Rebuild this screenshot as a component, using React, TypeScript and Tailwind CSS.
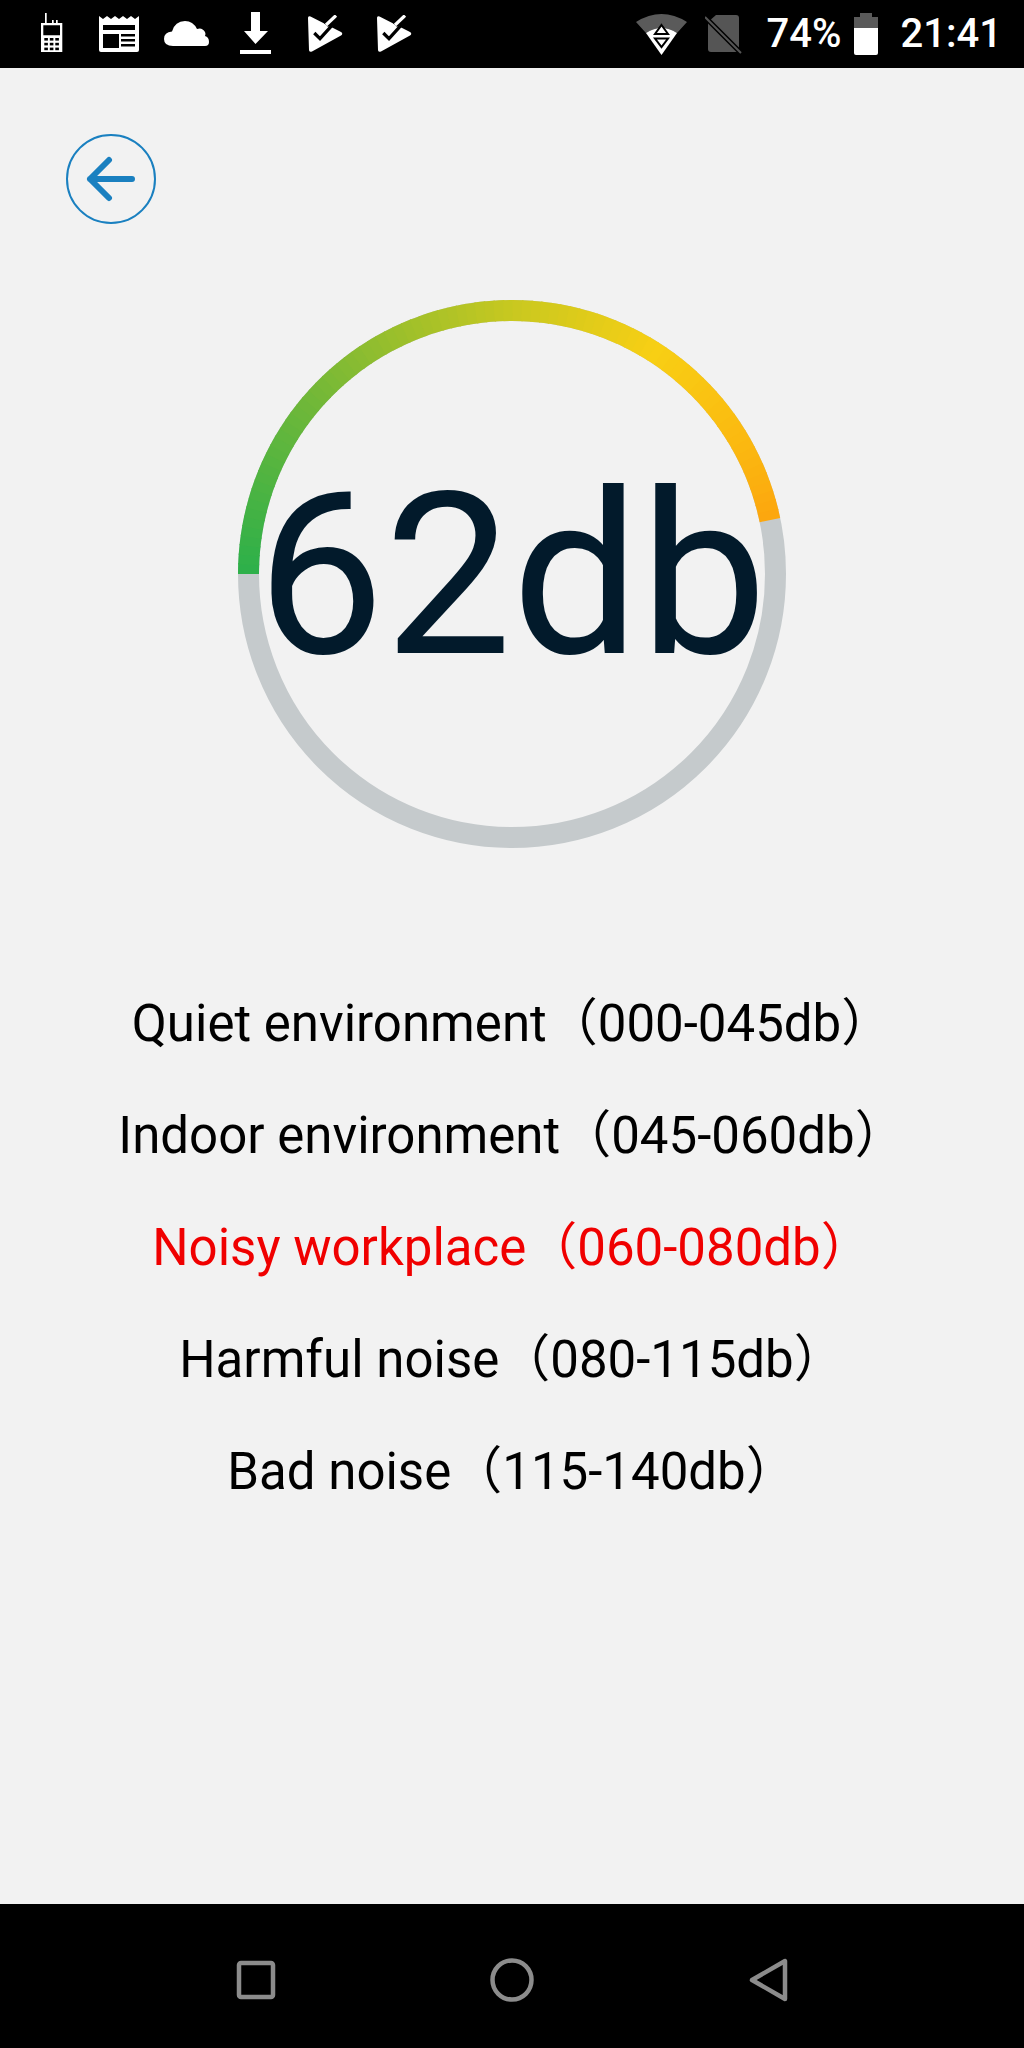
import React from 'react';

const levels = [
  { label: 'Quiet environment', range: '（000-045db）' },
  { label: 'Indoor environment', range: '（045-060db）' },
  { label: 'Noisy workplace', range: '（060-080db）', active: true },
  { label: 'Harmful noise', range: '（080-115db）' },
  { label: 'Bad noise', range: '（115-140db）' },
];

const stops: [number, number[]][] = [
  [0, [44, 176, 74]],
  [0.25, [115, 184, 56]],
  [0.4, [160, 192, 42]],
  [0.535, [200, 200, 32]],
  [0.73, [248, 207, 20]],
  [0.9, [251, 184, 16]],
  [1, [252, 166, 14]],
];

function colorAt(t: number) {
  for (let i = 1; i < stops.length; i++) {
    if (t <= stops[i][0]) {
      const [t0, c0] = stops[i - 1];
      const [t1, c1] = stops[i];
      const k = (t - t0) / (t1 - t0);
      return `rgb(${c0.map((v, j) => Math.round(v + (c1[j] - v) * k)).join(',')})`;
    }
  }
  return 'rgb(252,166,14)';
}

const GaugeArc = () => {
  const r = 263.5;
  const c = 274;
  const sweep = 168.2;
  const steps = 84;
  const pt = (deg: number) => {
    const a = ((180 + deg) * Math.PI) / 180;
    return `${(c + r * Math.cos(a)).toFixed(2)} ${(c + r * Math.sin(a)).toFixed(2)}`;
  };
  return (
    <svg viewBox="0 0 548 548" className="absolute inset-0 w-full h-full">
      <circle cx={c} cy={c} r={r} fill="none" stroke="#c5cacc" strokeWidth={21} />
      {Array.from({ length: steps }).map((_, i) => {
        const from = (sweep * i) / steps;
        const to = i === steps - 1 ? sweep : (sweep * (i + 1.15)) / steps;
        return (
          <path
            key={i}
            d={`M ${pt(from)} A ${r} ${r} 0 0 1 ${pt(to)}`}
            fill="none"
            stroke={colorAt((i + 0.5) / steps)}
            strokeWidth={21}
          />
        );
      })}
    </svg>
  );
};

const TicketCheck = () => (
  <svg width="36" height="38" viewBox="0 0 36 38">
    <path d="M1 3 Q1 0.5 3.5 1.5 L34 17 Q36.5 18.5 34 20.5 L5 36.5 Q2 37.5 2 35 Z" fill="#fff" />
    <path d="M19 10 L29 0" fill="none" stroke="#000" strokeWidth="6" />
    <path d="M19 10 L29 0.5" fill="none" stroke="#fff" strokeWidth="3.2" />
    <path d="M7.3 18 L13 23.7 L25.7 9.7" fill="none" stroke="#000" strokeWidth="3.2" />
  </svg>
);

const StatusLeft = () => (
  <div className="flex items-center h-full">
    {/* walkie */}
    <svg width="24" height="42" viewBox="0 0 24 42" className="ml-[40px]">
      <path d="M5 0 h1.7 v11 h-1.7 z M12 7 h1.7 v4 h-1.7 z M16 7 h1.7 v4 h-1.7 z" fill="#fff" />
      <path fillRule="evenodd" d="M1 10 h21.3 v29 h-21.3 z M3.3 12.3 v10 h16.7 v-10 z" fill="#fff" />
      {[0, 1, 2].map(row =>
        [0, 1, 2].map(col => (
          <rect key={`${row}${col}`} x={4.3 + col * 5.5} y={25 + row * 4.8} width="3.6" height="2.6" fill="#000" />
        ))
      )}
    </svg>
    {/* news */}
    <svg width="42" height="38" viewBox="0 0 42 38" className="ml-[34px]">
      <path
        fillRule="evenodd"
        d="M1 1 l4 3 l4 -3 l4 3 l4 -3 l4 3 l4 -3 l4 3 l4 -3 l4 3 l4 -3 V35 q0 2 -2 2 H3 q-2 0 -2 -2 z M5 10 v5 h32 v-5 z M5 19 v14 h16 v-14 z M23 19 v2.5 h14 v-2.5 z M23 24 v2.5 h14 v-2.5 z M23 29 v2.5 h14 v-2.5 z"
        fill="#fff"
      />
    </svg>
    {/* cloud */}
    <svg width="46" height="26" viewBox="0 0 46 26" className="ml-[24px]">
      <path
        d="M9 25 Q0 25 0 18 Q0 11 8 10.5 Q11 0 21 0 Q29 0 33 8 Q38 6 41 11 Q42 13 41 15 Q45 16 45 21 Q45 25 41 25 Z"
        fill="#fff"
      />
    </svg>
    {/* download */}
    <svg width="32" height="44" viewBox="0 0 32 44" className="ml-[30px]">
      <path d="M11 0 h9 v19 h8 L15.5 32 L4 19 h7 z M0 38 h31 v4 h-31 z" fill="#fff" />
    </svg>
    <div className="ml-[35px]"><TicketCheck /></div>
    <div className="ml-[33px]"><TicketCheck /></div>
  </div>
);

const StatusRight = () => (
  <div className="flex items-center h-full">
    {/* wifi */}
    <svg width="51" height="41" viewBox="0 0 51 41">
      <path d="M0 8 Q25.5 -8 51 8 L41 19 Q25.5 9 10 19 Z" fill="#5a5a5a" />
      <path d="M10 19 Q25.5 9 41 19 L25.5 41 Z" fill="#fff" />
      <path d="M25.5 11 L32 20 H19 Z M19 24.5 H32 L25.5 33 Z" fill="#fff" stroke="#000" strokeWidth="2" />
    </svg>
    {/* no sim */}
    <svg width="38" height="42" viewBox="0 0 38 42" className="ml-[18px]">
      <path d="M11 2 H31 q3 0 3 3 V36 q0 3 -3 3 H6 q-3 0 -3 -3 V9 Z" fill="#555" />
      <path d="M0 4 L36 40" stroke="#000" strokeWidth="5" />
      <path d="M0 4 L36 40" stroke="#555" strokeWidth="2" />
    </svg>
    <span className="ml-[24px] text-[40px] leading-none font-medium text-white">74%</span>
    {/* battery */}
    <svg width="24" height="42" viewBox="0 0 24 42" className="ml-[12px]">
      <path d="M6 0 h12 v4 h6 v11 h-24 v-11 h6 z" fill="#5a5a5a" />
      <path d="M0 15 h24 v25 q0 2 -2 2 h-20 q-2 0 -2 -2 z" fill="#fff" />
    </svg>
    <span className="ml-[23px] mr-[22px] text-[40px] leading-none font-medium text-white">21:41</span>
  </div>
);

export default function App() {
  return (
    <div className="flex flex-col h-screen bg-[#f2f2f2] font-['Roboto','Noto_Sans_CJK_SC',sans-serif] overflow-hidden">
      <header className="h-[68px] shrink-0 bg-black flex items-center justify-between">
        <StatusLeft />
        <StatusRight />
      </header>

      <main className="flex-grow flex flex-col">
        <button className="ml-[66px] mt-[66px] w-[90px] h-[90px] rounded-full border-2 border-[#1a80c0] flex items-center justify-center">
          <svg width="52" height="46" viewBox="0 0 52 46">
            <path d="M47 23 H5 M24 4 L5 23 L24 42" fill="none" stroke="#1a80c0" strokeWidth="6" strokeLinecap="round" strokeLinejoin="round" />
          </svg>
        </button>

        <div className="relative w-[548px] h-[548px] mx-auto mt-[76px]">
          <GaugeArc />
          <div className="absolute inset-0 flex items-center justify-center pt-[2px]">
            <span className="text-[227px] leading-none text-[#021a2b] whitespace-nowrap">62db</span>
          </div>
        </div>

        <ul className="mt-[148px] flex flex-col items-center gap-[56px]">
          {levels.map(level => (
            <li
              key={level.label}
              className={`h-[56px] leading-[56px] text-[51px] whitespace-nowrap ${level.active ? 'text-[#f00000]' : 'text-black'}`}
            >
              {level.label}
              {level.range}
            </li>
          ))}
        </ul>
      </main>

      <footer className="h-[144px] shrink-0 bg-black flex items-center pt-[7px]">
        <svg width="40" height="40" viewBox="0 0 40 40" className="ml-[236px]">
          <rect x="3" y="3" width="34" height="34" rx="2" fill="none" stroke="#8c8c8c" strokeWidth="4.5" />
        </svg>
        <svg width="44" height="44" viewBox="0 0 44 44" className="ml-[214px]">
          <circle cx="22" cy="22" r="19.5" fill="none" stroke="#8c8c8c" strokeWidth="4.5" />
        </svg>
        <svg width="40" height="44" viewBox="0 0 40 44" className="ml-[215px]">
          <path d="M36 3 V41 L3 22 Z" fill="none" stroke="#8c8c8c" strokeWidth="4.5" strokeLinejoin="round" />
        </svg>
      </footer>
    </div>
  );
}
